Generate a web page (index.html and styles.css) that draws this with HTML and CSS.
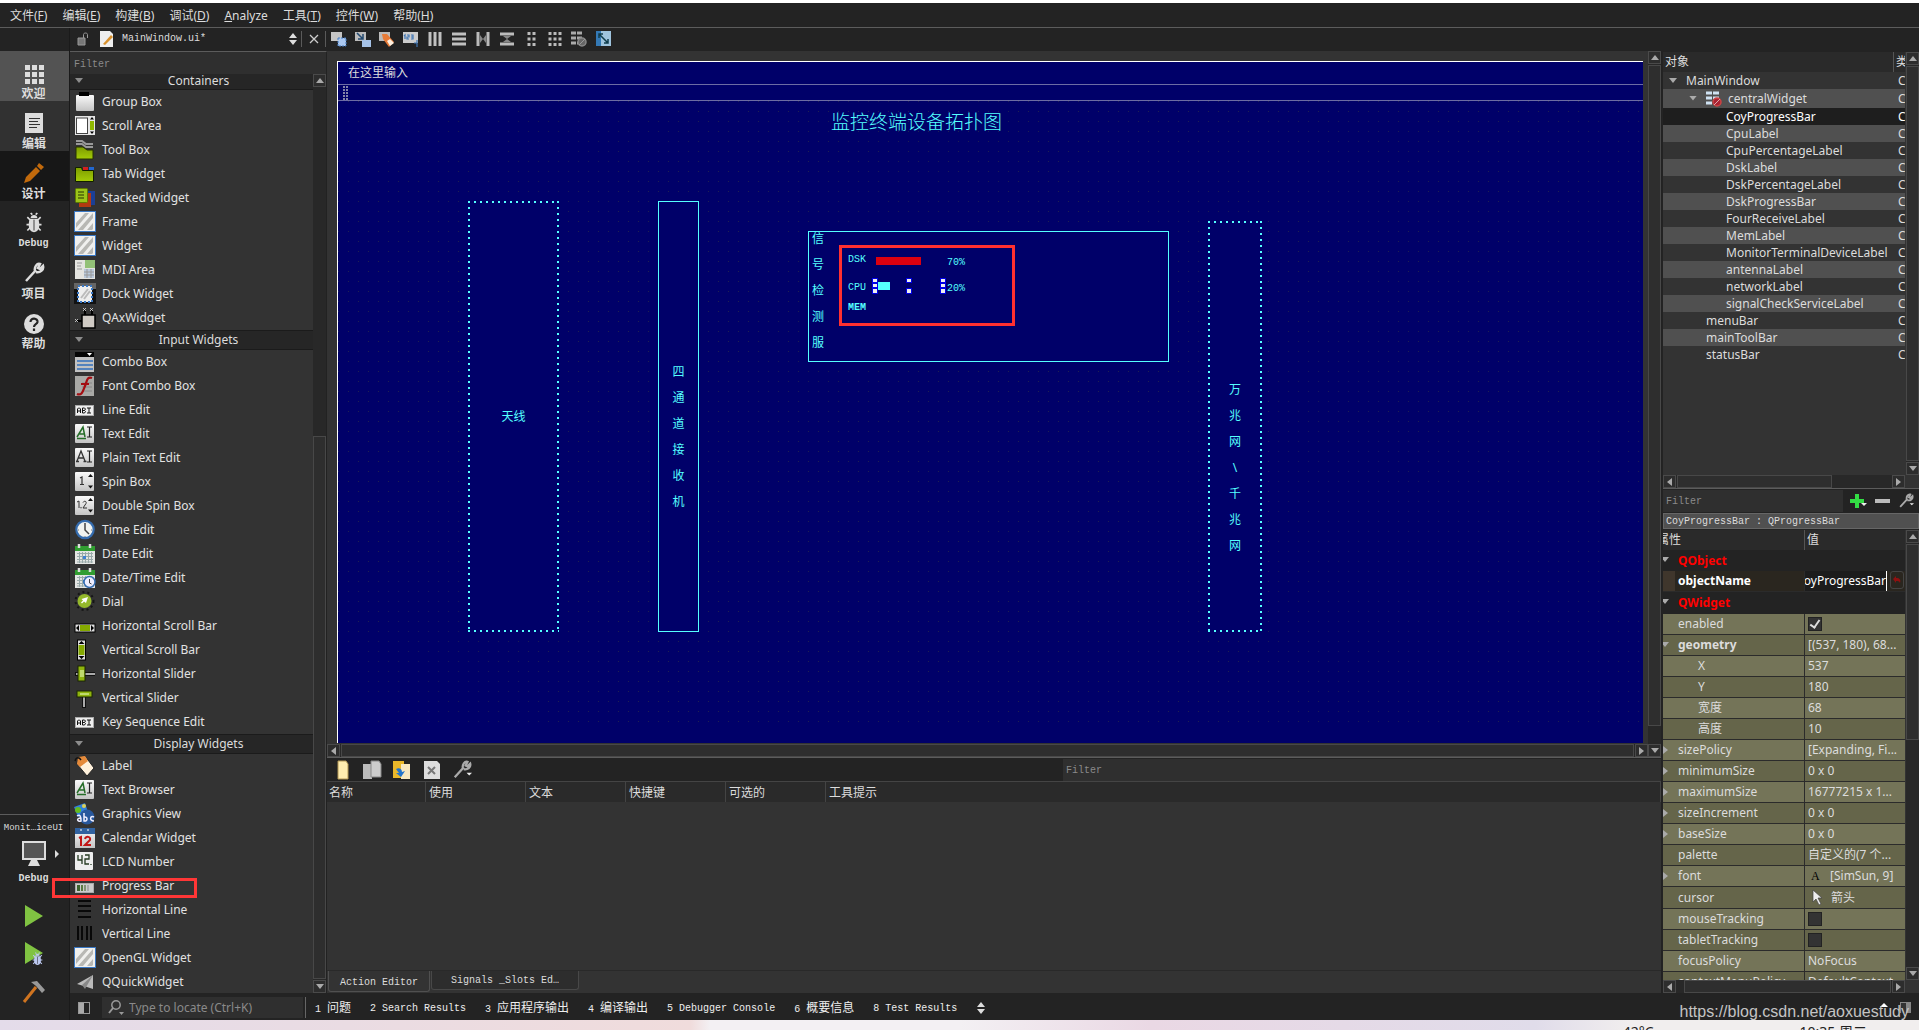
FILE: index.html
```html
<!DOCTYPE html>
<html lang="zh-CN">
<head>
<meta charset="utf-8">
<title>MainWindow.ui - Qt Creator</title>
<link rel="stylesheet" href="styles.css">
</head>
<body>
<svg class="sprite" aria-hidden="true">
<defs>
<linearGradient id="paper" x1="0" y1="0" x2="0" y2="1"><stop offset="0" stop-color="#fafafa"/><stop offset="1" stop-color="#c4c4c4"/></linearGradient>
<linearGradient id="green" x1="0" y1="0" x2="0" y2="1"><stop offset="0" stop-color="#7d9c00"/><stop offset="1" stop-color="#a4cc08"/></linearGradient>
</defs>
<symbol id="group" viewBox="0 0 22 22"><rect x="2" y="4" width="18" height="16" rx="1" fill="url(#paper)"/><path d="M5 1h10v4H5z" fill="#000"/></symbol>
<symbol id="scrollarea" viewBox="0 0 22 22"><rect x="1" y="1" width="20" height="19" fill="#e6e6e6"/><rect x="2.500" y="3" width="11" height="15.500" fill="#fff" stroke="#444"/><path d="M16 6h4v9h-4z" fill="#8fb800"/><path d="M18 2l2 2.500h-4zM18 19l2-2.500h-4z" fill="#000"/></symbol>
<symbol id="toolbox" viewBox="0 0 22 22"><path d="M2 8h7l4 3h6v9H2z" fill="url(#green)" stroke="#263300"/><path d="M2 2h6l4 3h7M2 5h6l4 3h7" stroke="#999" fill="none" stroke-width="2"/></symbol>
<symbol id="tabw" viewBox="0 0 22 22"><path d="M1.500 4.500h6l1 3h11v11h-18z" fill="url(#green)" stroke="#122000"/><path d="M9 4h5v3H9z" fill="#d42020"/><path d="M15 4h5v3h-5z" fill="#2267cf"/></symbol>
<symbol id="stacked" viewBox="0 0 22 22"><rect x="9" y="4" width="12" height="14" fill="#1c3f96"/><rect x="5" y="6" width="12" height="14" fill="#b33a11"/><rect x="1.500" y="1.500" width="12" height="14" rx="1" fill="#9cc51a" stroke="#5e7c00"/><path d="M4 5h6M4 8h6M4 11h6" stroke="#243300"/></symbol>
<symbol id="frame" viewBox="0 0 22 22"><rect x=".5" y=".5" width="21" height="20" fill="#f0f0ee" stroke="#3a78c4"/><path d="M2 12L11 2h4L2 17zM4 19L19 2v5L9 19zM13 19l6-7v6l-1 1z" fill="#b8b8b4"/></symbol>
<symbol id="mdi" viewBox="0 0 22 22"><rect x="1" y="1" width="20" height="19" fill="#e4e4e0"/><path d="M11 1h10v8H11z" fill="#93c177"/><path d="M10 10h10v9H10z" fill="#b9c9dc"/><path d="M3 4h5M3 7h4M3 10h5M10 13h10M10 16h10M13 10v9M17 10v9" stroke="#999"/></symbol>
<symbol id="dock" viewBox="0 0 22 22"><rect width="22" height="21" fill="#111"/><path d="M0 0h22v6H0z" fill="#666"/><rect x="4" y="3" width="14" height="16" fill="#eee" stroke="#3a78c4" stroke-width="2" stroke-dasharray="2 2"/><path d="M7 15l7-9M10 16l6-8" stroke="#bbb" stroke-width="2"/></symbol>
<symbol id="qax" viewBox="0 0 22 22"><path d="M8 8h13v13H8z" fill="#cfcac4" stroke="#000" stroke-width="1.500"/><path d="M11 8V3M18 8V3M8 14H3" stroke="#000" stroke-width="2"/><path d="M9 1l3 3M12 1L9 4M16 1l3 3M19 1l-3 3M1 12l3 3M4 12l-3 3" stroke="#ddd" stroke-width=".8"/></symbol>
<symbol id="combo" viewBox="0 0 22 22"><path d="M1 1h19v20H1z" fill="#c2c2c2"/><path d="M1 1h19v5H1z" fill="#050505"/><path d="M13 2h5l-2.500 3z" fill="#fff"/><path d="M3 10h16M3 14h16M3 18h16" stroke="#5583bd" stroke-width="2"/></symbol>
<symbol id="fontcombo" viewBox="0 0 22 22"><path d="M1 1h19v20H1z" fill="#a9a9a6"/><path d="M8 8h10M8 12h10M8 16h10" stroke="#888"/><path d="M18 3c-5-2-5 3-7 8s-3 10-8 8M7 9h8" fill="none" stroke="#a40d12" stroke-width="2.200"/></symbol>
<symbol id="lineedit" viewBox="0 0 22 22"><rect x="1.500" y="6.500" width="18" height="10" fill="#eee" stroke="#aaa"/><path d="M3.500 14v-4l1-1h1l1 1v4M3.500 12h3M8.500 14V9h2l1 1-1 1.500 1 1-1 1.500zM8.500 11.500h2M13 9h4M13 14h4M15 9v5" fill="none" stroke="#111"/></symbol>
<symbol id="textedit" viewBox="0 0 22 22"><rect x="1" y="1" width="19" height="19" rx="1" fill="url(#paper)"/><path d="M3 14l6-10 2 10M5.500 11h5M3 15.500h9" fill="none" stroke="#256d28" stroke-width="1.500"/><path d="M13 4h5M13 14h5M15.500 4v10" stroke="#222" stroke-width="1.200"/></symbol>
<symbol id="plaintext" viewBox="0 0 22 22"><rect x="1" y="1" width="19" height="19" rx="1" fill="url(#paper)"/><path d="M3 14L7 4l4 10M4.500 11h5M2 14.500h3M9.500 14.500h3" fill="none" stroke="#333" stroke-width="1.300"/><path d="M13 4h5M13 15h5M15.500 4v11" stroke="#222" stroke-width="1.200"/></symbol>
<symbol id="spin" viewBox="0 0 22 22"><rect x="1" y="1" width="19" height="19" rx="1" fill="url(#paper)"/><path d="M6 7l2-1v7M6 13.500h4" fill="none" stroke="#333" stroke-width="1.200"/><path d="M16.500 3l2.500 3h-5zM16.500 17.500L19 14.500h-5z" fill="#111"/></symbol>
<symbol id="dspin" viewBox="0 0 22 22"><rect x="1" y="1" width="19" height="19" rx="1" fill="url(#paper)"/><path d="M3 7l2-1v7M7 12v1.300M9 7.500c1-2 4-1.500 3 1l-3 4.500h4" fill="none" stroke="#333"/><path d="M16.500 3l2.500 3h-5zM16.500 17.500L19 14.500h-5z" fill="#111"/></symbol>
<symbol id="clock" viewBox="0 0 22 22"><circle cx="11" cy="10.500" r="8.700" fill="#f1f3f0" stroke="#356cae" stroke-width="2.200"/><path d="M11 4v7l4 4" fill="none" stroke="#444" stroke-width="1.500"/><path d="M4 11h1M17 11h1M11 17v1" stroke="#777"/></symbol>
<symbol id="date" viewBox="0 0 22 22"><path d="M1 3h20v18H1z" fill="#e4e6e4"/><path d="M1 3h20v5H1z" fill="#319d31"/><path d="M5 1v4M16 1v4" stroke="#ddd" stroke-width="2.500"/><path d="M3 10.500h16M3 13.500h16M3 16.500h16M3 19h16M5.500 9v11M8.500 9v11M11.500 9v11M14.500 9v11M17.500 9v11" stroke="#9aa"/><path d="M9 13h3v3H9z" fill="#3f82d4"/></symbol>
<symbol id="datetime" viewBox="0 0 22 22"><use href="#date"/><circle cx="15.500" cy="15" r="5.500" fill="#eef" stroke="#356cae" stroke-width="1.500"/><path d="M15.500 12v4l2 1" fill="none" stroke="#444"/></symbol>
<symbol id="dial" viewBox="0 0 22 22"><circle cx="10.500" cy="10" r="9" fill="none" stroke="#151515" stroke-width="2" stroke-dasharray="2 3"/><circle cx="10.500" cy="10" r="7" fill="#94b82b"/><path d="M14 6l-2 6-2-1.500-2 2-1-1 2-2L7.500 8z" fill="#fff"/></symbol>
<symbol id="hsb" viewBox="0 0 22 22"><rect x="1" y="9" width="20" height="8" fill="#ddd" stroke="#000"/><path d="M6 10h10v6H6z" fill="#85a900"/><path d="M2 13l3-3v6zM20 13l-3-3v6z" fill="#000"/></symbol>
<symbol id="vsb" viewBox="0 0 22 22"><rect x="3.500" y="1" width="8" height="20" fill="#ddd" stroke="#000"/><path d="M4.500 6h6v10h-6z" fill="#85a900"/><path d="M7.500 2l3 3h-6zM7.500 20l3-3h-6z" fill="#000"/></symbol>
<symbol id="hslider" viewBox="0 0 22 22"><path d="M1 11h20" stroke="#111" stroke-width="4"/><path d="M2 11h19" stroke="#aaa" stroke-width="2"/><rect x="4" y="3" width="7" height="15" fill="#8fb40e" stroke="#1b2600"/><path d="M7 7v7M9 7v7" stroke="#efc"/></symbol>
<symbol id="vslider" viewBox="0 0 22 22"><path d="M10 4v17" stroke="#111" stroke-width="4"/><path d="M10 4v16" stroke="#aaa" stroke-width="2"/><rect x="3" y="4" width="15" height="6" fill="#8fb40e" stroke="#1b2600"/><path d="M6 7h9" stroke="#efc"/></symbol>
<symbol id="label" viewBox="0 0 22 22"><path d="M4 2l7-1 9 12-7 8L3 9z" fill="#fff1dc" stroke="#222"/><path d="M4 2l7-1 3 5-8 6-3-3z" fill="#e58a3a"/><path d="M1 6c1-4 4-4 6-1" fill="none" stroke="#111" stroke-width="1.500"/></symbol>
<symbol id="graphics" viewBox="0 0 22 22"><path d="M0 4l11-4 3 9-10 5z" fill="#3080dd"/><circle cx="4" cy="7" r="3" fill="#66bb20"/><circle cx="10" cy="3" r="2" fill="#ddd055"/><circle cx="13" cy="14" r="7.500" fill="#28589d"/><path d="M3 13c3-2 4 0 4 5-4 1-5-3 0-3M10 10v8c4 1 4-5 0-4M20 14c-4-2-5 4 0 4" fill="none" stroke="#eef" stroke-width="1.500"/></symbol>
<symbol id="calendar" viewBox="0 0 22 22"><path d="M1 1h20v20H1z" fill="url(#paper)"/><path d="M1 1h20v6H1z" fill="#3162a0"/><path d="M6 3h2M13 3h2" stroke="#fff"/><path d="M5 11l2-1v9M11 12c1-3 6-3 5 1l-5 5h6" fill="none" stroke="#c11616" stroke-width="2"/></symbol>
<symbol id="lcd" viewBox="0 0 22 22"><rect x="1" y="1" width="18" height="18" rx="1" fill="#eee"/><path d="M4 4v5h4M8 4v9M11 4h4v4h-4v5h4M17 13v1" fill="none" stroke="#263b22" stroke-width="1.300"/></symbol>
<symbol id="progress" viewBox="0 0 22 22"><rect x="1.500" y="8.500" width="18" height="9" fill="#ccc" stroke="#aaa"/><path d="M3 10h3v6H3z" fill="#3c632e"/><path d="M7 10h2v6H7z" fill="#597b42"/><path d="M10 10h2v6h-2z" fill="#829475"/><path d="M13 10h2v6h-2z" fill="#aaa"/></symbol>
<symbol id="hline" viewBox="0 0 22 22"><path d="M4 2h13M4 7h13M4 12h13M4 18h13" stroke="#080808" stroke-width="2"/></symbol>
<symbol id="vline" viewBox="0 0 22 22"><path d="M4 3v14M8 3v14M13 3v14M17 3v14" stroke="#080808" stroke-width="2"/></symbol>
<symbol id="plane" viewBox="0 0 22 22"><path d="M3 13L19 4v14l-6-2z" fill="#bbb"/><path d="M8 14l11-10-8 14z" fill="#888"/></symbol>
<symbol id="wrench" viewBox="0 0 22 22"><path d="M3 19L13 8M12 9c-1-4 2-8 5-7l-2 4 2 1 3-3c1 4-3 7-7 6" fill="none" stroke="currentColor" stroke-width="2.500"/></symbol>
<symbol id="wrenchmenu" viewBox="0 0 22 22"><use href="#wrench"/><path d="M16 14h6l-3 3z" fill="#eee"/></symbol>
<symbol id="updown" viewBox="0 0 8 12"><path d="M4 0l4 5H0zM4 12l4-5H0z" fill="#ddd"/></symbol>
<symbol id="bug" viewBox="0 0 24 26"><path d="M8 7c0-5 8-5 8 0z" fill="currentColor"/><path d="M3 15h18M4 22l4-4M20 22l-4-4M4 6l4 4M20 6l-4 4M8 1l2 2M16 1l-2 2" fill="none" stroke="currentColor" stroke-width="2"/><path d="M7 8h10c3 8 1 16-5 16S4 16 7 8z" fill="currentColor"/><path d="M12 9v13" stroke="#232323"/></symbol>
</svg>

<div class="desk"></div>
<nav class="menubar">
<a href="#">文件(<u>F</u>)</a><a href="#">编辑(<u>E</u>)</a><a href="#">构建(<u>B</u>)</a><a href="#">调试(<u>D</u>)</a><a href="#"><u>A</u>nalyze</a><a href="#">工具(<u>T</u>)</a><a href="#">控件(<u>W</u>)</a><a href="#">帮助(<u>H</u>)</a>
</nav>

<div class="app">
<aside class="modes">
<button class="mode lit"><svg width="20" height="20" viewBox="0 0 20 20"><path d="M1 1h5v5H1zM8 1h5v5H8zM15 1h5v5h-5zM1 8h5v5H1zM8 8h5v5H8zM15 8h5v5h-5zM1 15h5v5H1zM8 15h5v5H8zM15 15h5v5h-5z" fill="#ddd"/></svg><b>欢迎</b></button>
<button class="mode edit"><svg width="20" height="20" viewBox="0 0 20 20"><path d="M1 0h18v20H1z" fill="#ddd"/><path d="M5 5.500h11M5 8.500h9M5 11.500h11M5 14.500h8" stroke="#333"/></svg><b>编辑</b></button>
<button class="mode design"><svg width="22" height="22" viewBox="0 0 22 22"><path d="M1 21l2-6L13 5l4 4L7 19zM14 4l2-3 5 4-3 3z" fill="#c26a0c"/></svg><b>设计</b></button>
<button class="mode"><svg width="20" height="22"><use href="#bug"/></svg><b class="mono">Debug</b></button>
<button class="mode"><svg width="22" height="22"><use href="#wrench"/></svg><b>项目</b></button>
<button class="mode"><svg width="20" height="20" viewBox="0 0 20 20"><circle cx="10" cy="10" r="10" fill="#ddd"/><path d="M6.500 8c0-5 7.500-4 7 0-.5 2.500-3.500 2-3.500 5M10 14.500V17" fill="none" stroke="#232323" stroke-width="2.200"/></svg><b>帮助</b></button>
<div class="kit">
<span class="mono project">Monit…iceUI</span>
<button class="target"><svg width="26" height="25" viewBox="0 0 26 25"><path d="M2 1h22v17H2z" fill="#555" stroke="#ddd" stroke-width="2"/><path d="M10 19h6l3 6H7z" fill="#ddd"/></svg><svg class="more" width="4" height="8" viewBox="0 0 4 8"><path d="M0 0l4 4-4 4z" fill="#ddd"/></svg></button>
<b class="mono">Debug</b>
<button class="run" aria-label="Run"><svg width="20" height="22" viewBox="0 0 20 22"><path d="M1 0l18 11L1 22z" fill="#80c342"/></svg></button>
<button class="run" aria-label="Start debugging"><svg width="20" height="24" viewBox="0 0 20 24"><path d="M1 0l18 11L1 22z" fill="#80c342"/><svg x="7" y="10" width="13" height="14" color="#bcc8f0"><use href="#bug"/></svg></svg></button>
<button class="run" aria-label="Build"><svg width="24" height="22" viewBox="0 0 24 22"><path d="M2 21L14 6" stroke="#cf7420" stroke-width="3"/><path d="M9 1l6-1 8 9-3 3-6-7z" fill="#999"/></svg></button>
</div>
</aside>

<div class="content">
<div class="toolbar">
<div class="filebar"><svg width="12" height="14" viewBox="0 0 12 14"><path d="M1 6h7v7H1z" fill="#777" stroke="#999"/><path d="M6.500 6V2.500c0-2 4-2 4 0V6" fill="none" stroke="#999"/></svg>
<svg class="doc" width="14" height="16" viewBox="0 0 14 16"><path d="M0 0h10l3 3v13H0z" fill="#eee"/><path d="M3 13l8-9 2 2-8 8z" fill="#d7902c"/></svg>
<span class="mono">MainWindow.ui*</span><svg class="end" width="8" height="12"><use href="#updown"/></svg><i></i><button aria-label="Close"><svg width="10" height="10" viewBox="0 0 10 10"><path d="M1 1l8 8M9 1L1 9" stroke="#ccc" stroke-width="1.300"/></svg></button><i></i></div>
<div class="tools">
<svg viewBox="0 0 16 16"><path d="M0 1h11v9H0z" fill="#c4c4c4"/><rect x="7" y="7" width="8" height="8" fill="#abc8f0" stroke="#447bbf" stroke-dasharray="2 1"/></svg>
<svg viewBox="0 0 16 16"><path d="M0 1h11v9H0z" fill="#bbb"/><path d="M2 2l6 6M8 3v5H3" fill="none" stroke="#234a70" stroke-width="1.500"/><path d="M7 9h9v7H7z" fill="#a6c3e8"/></svg>
<svg viewBox="0 0 16 16"><path d="M0 1h11v9H0z" fill="#bbb"/><path d="M3 3l5 0 7 8-5 5-6-8z" fill="#e77b38"/><path d="M8 10l3-2 4 4-4 3z" fill="#fff0df"/></svg>
<svg viewBox="0 0 16 16"><path d="M0 1h15v11H0z" fill="#ccc"/><path d="M1 5l1-1v4M4 4h2v2H4v2h2M8 4h2v2H8M10 6v2H8M11 12h3M14 9v7" fill="none" stroke="#3d75b5" stroke-width="1.200"/></svg>
<svg viewBox="0 0 16 16"><path d="M3 1v14M8 1v14M13 1v14" stroke="#c0c0c0" stroke-width="3"/></svg>
<svg viewBox="0 0 16 16"><path d="M1 3h14M1 8h14M1 13h14" stroke="#c0c0c0" stroke-width="3"/></svg>
<svg viewBox="0 0 16 16"><path d="M3 1v14M13 1v14" stroke="#bbb" stroke-width="3"/><path d="M5 4l3 4 3-4v8L8 8l-3 4z" fill="#888"/></svg>
<svg viewBox="0 0 16 16"><path d="M1 3h14M1 13h14" stroke="#bbb" stroke-width="3"/><path d="M4 5h8L8 8l4 3H4l4-3z" fill="#888"/></svg>
<svg viewBox="0 0 16 16"><path d="M6 1v14M11 1v14" stroke="#bbb" stroke-width="3" stroke-dasharray="3 2.500"/></svg>
<svg viewBox="0 0 16 16"><path d="M3 1v14M8 1v14M13 1v14" stroke="#bbb" stroke-width="3" stroke-dasharray="3 2.500"/></svg>
<svg viewBox="0 0 16 16"><path d="M0 2h12M0 7h12M0 12h7" stroke="#aaa" stroke-width="3" stroke-dasharray="5 1"/><circle cx="11" cy="11" r="4" fill="#666" stroke="#888" stroke-width="1.500"/><path d="M8 14l6-6" stroke="#999"/></svg>
<svg viewBox="0 0 16 16"><path d="M1 0h15v15H1z" fill="#9fc4de"/><path d="M1 0h5v15H1z" fill="#3479b5"/><path d="M4 3l9 9M4 7V3h4M13 8v4H9" fill="none" stroke="#103d4c" stroke-width="1.500"/></svg>
</div>
</div>

<div class="work">
<section class="widgetbox">
<input class="filter" placeholder="Filter" aria-label="Filter widgets">
<div class="boxbody">
<div class="list">
<h2>Containers</h2>
<ul><li><svg><use href="#group"/></svg>Group Box</li><li><svg><use href="#scrollarea"/></svg>Scroll Area</li><li><svg><use href="#toolbox"/></svg>Tool Box</li><li><svg><use href="#tabw"/></svg>Tab Widget</li><li><svg><use href="#stacked"/></svg>Stacked Widget</li><li><svg><use href="#frame"/></svg>Frame</li><li><svg><use href="#frame"/></svg>Widget</li><li><svg><use href="#mdi"/></svg>MDI Area</li><li><svg><use href="#dock"/></svg>Dock Widget</li><li><svg><use href="#qax"/></svg>QAxWidget</li></ul>
<h2>Input Widgets</h2>
<ul><li><svg><use href="#combo"/></svg>Combo Box</li><li><svg><use href="#fontcombo"/></svg>Font Combo Box</li><li><svg><use href="#lineedit"/></svg>Line Edit</li><li><svg><use href="#textedit"/></svg>Text Edit</li><li><svg><use href="#plaintext"/></svg>Plain Text Edit</li><li><svg><use href="#spin"/></svg>Spin Box</li><li><svg><use href="#dspin"/></svg>Double Spin Box</li><li><svg><use href="#clock"/></svg>Time Edit</li><li><svg><use href="#date"/></svg>Date Edit</li><li><svg><use href="#datetime"/></svg>Date/Time Edit</li><li><svg><use href="#dial"/></svg>Dial</li><li><svg><use href="#hsb"/></svg>Horizontal Scroll Bar</li><li><svg><use href="#vsb"/></svg>Vertical Scroll Bar</li><li><svg><use href="#hslider"/></svg>Horizontal Slider</li><li><svg><use href="#vslider"/></svg>Vertical Slider</li><li><svg><use href="#lineedit"/></svg>Key Sequence Edit</li></ul>
<h2>Display Widgets</h2>
<ul><li><svg><use href="#label"/></svg>Label</li><li><svg><use href="#textedit"/></svg>Text Browser</li><li><svg><use href="#graphics"/></svg>Graphics View</li><li><svg><use href="#calendar"/></svg>Calendar Widget</li><li><svg><use href="#lcd"/></svg>LCD Number</li><li class="marked"><svg><use href="#progress"/></svg>Progress Bar</li><li><svg><use href="#hline"/></svg>Horizontal Line</li><li><svg><use href="#vline"/></svg>Vertical Line</li><li><svg><use href="#frame"/></svg>OpenGL Widget</li><li><svg><use href="#plane"/></svg>QQuickWidget</li></ul>
</div>
<div class="sb v box-sb"><button class="up"></button><div class="track"><span class="thumb"></span></div><button class="down"></button></div>
</div>
</section>

<main class="center">
<div class="formrow">
<div class="viewport">
<div class="form">
<div class="form-menu">在这里输入</div>
<div class="form-tool"><span></span></div>
<div class="canvas">
<div class="title">监控终端设备拓扑图</div>
<div class="node dotted antenna">天线</div>
<div class="node receiver">四<br>通<br>道<br>接<br>收<br>机</div>
<div class="node signal">信<br>号<br>检<br>测<br>服</div>
<div class="node dotted network">万<br>兆<br>网<br>\<br>千<br>兆<br>网</div>
<span class="val dsk">DSK</span><span class="val cpu">CPU</span><span class="val mem">MEM</span>
<span class="val dskp">70%</span><span class="val cpup">20%</span>
<div class="bar red"></div><div class="bar cyan"></div>
<div class="handles"><i></i><i></i><i></i><i></i><i class="gap"></i><i></i><i></i><i></i><i></i></div>
<div class="callout"></div>
</div>
<div class="form-status"></div>
</div>
<div class="sb h"><button class="left"></button><div class="track"><span class="thumb"></span></div><button class="right"></button></div>
</div>
<div class="sb v form-sb"><button class="up"></button><div class="track"><span class="thumb"></span></div><button class="down"></button></div>
</div>
<div class="actions">
<div class="action-tools">
<svg viewBox="0 0 20 20"><path d="M6 1h8l2 3v15H6z" fill="#ffedb0" stroke="#b39755"/></svg>
<svg viewBox="0 0 20 20"><path d="M1 4h9v15H1z" fill="#bbb"/><path d="M9 1h8l2 3v13H9z" fill="#ccc" stroke="#888"/></svg>
<svg viewBox="0 0 20 20"><path d="M1 1h11v17H1z" fill="#e9b72a"/><path d="M9 4h9v15H9z" fill="#f7e7c0"/><path d="M4 9c3-2 6 0 6 3l3-1-4 6-5-4h3" fill="#2273cb"/></svg>
<svg viewBox="0 0 20 20"><path d="M2 1h13l3 3v15H2z" fill="#ddd"/><path d="M6 7l7 7M13 7l-7 7" stroke="#777" stroke-width="2"/></svg>
<svg class="wr" viewBox="0 0 22 22"><use href="#wrenchmenu"/></svg>
<input class="filter" placeholder="Filter" aria-label="Filter actions">
</div>
<table class="action-table"><thead><tr><th>名称</th><th>使用</th><th>文本</th><th>快捷键</th><th>可选的</th><th>工具提示</th></tr></thead></table>
<div class="tabs"><button class="mono on">Action Editor</button><button class="mono">Signals _Slots Ed…</button></div>
</div>
</main>

<aside class="inspect">
<div class="objects">
<div class="clip"><table class="tree">
<thead><tr><th>对象</th><th>类</th></tr></thead>
<tbody>
<tr><td class="l0"><span class="tri"></span>MainWindow</td><td>C</td></tr>
<tr class="tall"><td class="l1"><span class="tri"></span><svg width="16" height="16" viewBox="0 0 16 16"><path d="M0 2h13M0 7h13M0 12h6" stroke="#cfe2f2" stroke-width="3" stroke-dasharray="6 1"/><circle cx="11" cy="11" r="4" fill="#a23" stroke="#c44" stroke-width="1.500"/><path d="M8 14l6-6" stroke="#daa"/></svg>centralWidget</td><td>C</td></tr>
<tr class="sel"><td>CoyProgressBar</td><td>C</td></tr>
<tr><td>CpuLabel</td><td>C</td></tr>
<tr><td>CpuPercentageLabel</td><td>C</td></tr>
<tr><td>DskLabel</td><td>C</td></tr>
<tr><td>DskPercentageLabel</td><td>C</td></tr>
<tr><td>DskProgressBar</td><td>C</td></tr>
<tr><td>FourReceiveLabel</td><td>C</td></tr>
<tr><td>MemLabel</td><td>C</td></tr>
<tr><td>MonitorTerminalDeviceLabel</td><td>C</td></tr>
<tr><td>antennaLabel</td><td>C</td></tr>
<tr><td>networkLabel</td><td>C</td></tr>
<tr><td>signalCheckServiceLabel</td><td>C</td></tr>
<tr><td class="l2">menuBar</td><td>C</td></tr>
<tr><td class="l2">mainToolBar</td><td>C</td></tr>
<tr><td class="l2">statusBar</td><td>C</td></tr>
</tbody></table></div>
<div class="sb h obj-h"><button class="left"></button><div class="track"><span class="thumb"></span></div><button class="right"></button></div>
<div class="sb v"><button class="up"></button><div class="track"><span class="thumb"></span></div><button class="down"></button></div>
</div>
<div class="propbar"><input class="filter" placeholder="Filter" aria-label="Filter properties">
<svg viewBox="0 0 18 16"><path d="M6 1h4v5h5v4h-5v5H6v-5H1V6h5z" fill="#3d4"/><path d="M12 10h6l-3 3z" fill="#eee"/></svg><svg viewBox="0 0 18 16"><path d="M2 6h15v4H2z" fill="#bbb"/></svg><svg class="wr" viewBox="0 0 22 22"><use href="#wrenchmenu"/></svg></div>
<div class="who mono">CoyProgressBar : QProgressBar</div>
<div class="props">
<div class="clip"><table class="ptable">
<thead><tr><th><span>属性</span></th><th>值</th></tr></thead>
<tbody>
<tr class="cat"><td colspan="2"><span class="tri"></span>QObject</td></tr>
<tr class="name"><td>objectName</td><td><div class="edit"><input value="CoyProgressBar" aria-label="objectName"><button aria-label="Reset"><svg width="8" height="8" viewBox="0 0 8 8"><path d="M0 3l3-3v2c4 0 5 2 4 5-1-2-2-2-4-2v2z" fill="#8e1111"/></svg></button></div></td></tr>
<tr class="cat last"><td colspan="2"><span class="tri"></span>QWidget</td></tr>
<tr class="a"><td>enabled</td><td><input type="checkbox" checked aria-label="enabled"></td></tr>
<tr class="b bold"><td><span class="tri"></span>geometry</td><td>[(537, 180), 68...</td></tr>
<tr class="a sub"><td>X</td><td>537</td></tr>
<tr class="b sub"><td>Y</td><td>180</td></tr>
<tr class="a sub"><td>宽度</td><td>68</td></tr>
<tr class="b sub"><td>高度</td><td>10</td></tr>
<tr class="a"><td><span class="tri r"></span>sizePolicy</td><td>[Expanding, Fi...</td></tr>
<tr class="b"><td><span class="tri r"></span>minimumSize</td><td>0 x 0</td></tr>
<tr class="a"><td><span class="tri r"></span>maximumSize</td><td>16777215 x 1...</td></tr>
<tr class="b"><td><span class="tri r"></span>sizeIncrement</td><td>0 x 0</td></tr>
<tr class="a"><td><span class="tri r"></span>baseSize</td><td>0 x 0</td></tr>
<tr class="b"><td>palette</td><td>自定义的(7 个...</td></tr>
<tr class="a"><td><span class="tri r"></span>font</td><td><span class="fa">A</span>[SimSun, 9]</td></tr>
<tr class="b cur"><td>cursor</td><td><svg width="22" height="18" viewBox="0 0 22 18"><path d="M5 1v12l3-3 3 6 2-1-3-6h4z" fill="#eee" stroke="#444" stroke-width=".7"/></svg>箭头</td></tr>
<tr class="a"><td>mouseTracking</td><td><input type="checkbox" aria-label="mouseTracking"></td></tr>
<tr class="b"><td>tabletTracking</td><td><input type="checkbox" aria-label="tabletTracking"></td></tr>
<tr class="a"><td>focusPolicy</td><td>NoFocus</td></tr>
<tr class="b"><td>contextMenuPolicy</td><td>DefaultContext...</td></tr>
</tbody></table></div>
<div class="sb h prop-h"><button class="left"></button><div class="track"><span class="thumb"></span></div><button class="right"></button></div>
<div class="sb v prop-sb"><button class="up"></button><div class="track"><span class="thumb"></span></div><button class="down"></button></div>
</div>
</aside>
</div>

<footer class="status">
<button class="side" aria-label="Toggle sidebar"><svg width="12" height="12" viewBox="0 0 12 12"><rect x=".5" y=".5" width="11" height="11" fill="none" stroke="#999"/><path d="M1 1h5v10H1z" fill="#aaa"/></svg></button>
<label class="locate"><svg width="16" height="16" viewBox="0 0 16 16"><circle cx="8" cy="5" r="4.200" fill="none" stroke="#999" stroke-width="1.500"/><path d="M5 8l-4 5" stroke="#999" stroke-width="2"/><path d="M11 12h5l-2.500 3z" fill="#999"/></svg><input placeholder="Type to locate (Ctrl+K)"></label>
<nav class="mono"><button>1 <em>问题</em></button><button>2 Search Results</button><button>3 <em>应用程序输出</em></button><button>4 <em>编译输出</em></button><button>5 Debugger Console</button><button>6 <em>概要信息</em></button><button>8 Test Results</button></nav>
<svg class="ud" width="8" height="12"><use href="#updown"/></svg>
<svg class="rt" width="32" height="14" viewBox="0 0 32 14"><path d="M4 2l4 4H0z" fill="#fff"/><path d="M20 1h11v11H20z" fill="#888"/><path d="M21 2h5v10h-5z" fill="#333"/></svg>
<span class="mark">https://blog.csdn.net/aoxuestudy</span>
</footer>
</div>
</div>
<div class="taskbar"><span>42°C</span><span>10:35 周二</span></div>
</body>
</html>
```
FILE: styles.css
```css
*, *::before, *::after { box-sizing: border-box; }
body {
  margin: 0;
  height: 100vh;
  display: flex;
  flex-direction: column;
  overflow: hidden;
  background: #232323;
  color: #dcdcdc;
  font: 12px/16px "Noto Sans", "Noto Sans CJK SC", sans-serif;
}
button, input { font: inherit; color: inherit; border: 0; padding: 0; margin: 0; background: none; outline: 0; }
svg { display: block; flex: none; }
a { color: inherit; text-decoration: none; }
em { font: 12px/16px "Noto Sans CJK SC", sans-serif; }
.mono, .filter { font-family: "Liberation Mono", "Noto Sans CJK SC", monospace; font-size: 10px; }
.sprite { position: absolute; width: 0; height: 0; }
.desk { height: 3px; background: #fff; flex: none; }

.menubar { height: 25px; flex: none; display: flex; gap: 15px; padding: 2px 10px 0; align-items: center; border-bottom: 1px solid #5c5c5c; }

.app { flex: 1; min-height: 0; display: flex; }
.modes { width: 69px; flex: none; display: flex; flex-direction: column; padding-top: 23px; }
.mode { height: 50px; flex: none; display: flex; flex-direction: column; align-items: center; justify-content: flex-end; gap: 2px; color: #ddd; padding-right: 2px; }
.mode b, .kit b { line-height: 16px; }
.mode b { height: 15px; }
.mode.lit { background: #535353; }
.mode.edit { background: #313131; }
.mode.design { background: #171717; }
.kit { margin-top: auto; border-top: 1px solid #5c5c5c; display: flex; flex-direction: column; align-items: center; padding: 5px 2px 17px 0; }
.project { font-size: 9px; }
.target { display: flex; align-items: center; padding: 5px 0; position: relative; }
.more { position: absolute; left: 34px; }
.kit b { margin-bottom: 18px; }
.run { margin-bottom: 15px; }
.run:last-child { margin: 0; }

.content { flex: 1; min-width: 0; display: flex; flex-direction: column; border-left: 1px solid #1a1a1a; }
.toolbar { height: 23px; flex: none; display: flex; padding-bottom: 2px; }
.filebar { width: 256px; display: flex; align-items: center; padding-left: 7px; }
.filebar i { width: 1px; height: 16px; background: #5a5a5a; }
.filebar button { padding: 0 6px 0 7px; }
.doc { margin: 0 8px 0 11px; }
.end { margin: 0 4px 0 auto; }
.tools { display: flex; align-items: center; gap: 8px; padding-left: 5px; }
.tools svg { width: 16px; height: 16px; }

.work { flex: 1; min-height: 0; display: flex; }
.filter { background: #2f2f2f; color: #ddd; }
.filter::placeholder { color: #8a8a8a; }
.widgetbox { width: 257px; flex: none; display: flex; flex-direction: column; background: #333; border-top: 1px solid #5c5c5c; border-right: 1px solid #222; }
.widgetbox .filter { height: 22px; flex: none; padding: 2px 4px 0; width: 100%; }
.boxbody { flex: 1; min-height: 0; display: flex; }
.list { flex: 1; }
.list h2 { margin: 0; height: 20px; font: inherit; line-height: 18px; text-align: center; background: #262626; border: solid #1b1b1b; border-width: 1px 0; position: relative; padding-left: 14px; }
.list h2:first-child { height: 16px; line-height: 14px; border-top: 0; }
.list h2::before { content: ""; position: absolute; left: 5px; top: 6px; border: 4px solid transparent; border-top: 5px solid #8c8c8c; border-bottom: 0; }
.list h2:first-child::before { top: 4px; }
.list ul { margin: 0; padding: 0; list-style: none; }
.list li { height: 24px; display: flex; align-items: center; gap: 6px; padding-left: 4px; color: #e2e2e2; }
.list li svg { width: 22px; height: 22px; }
.marked { position: relative; }
.marked::after { content: ""; position: absolute; left: -18px; top: 4px; width: 145px; height: 20px; border: 3px solid #ff3636; }

.sb { display: flex; background: #282828; flex: none; }
.sb button { width: 13px; height: 13px; border: 1px solid #4a4a4a; background: #2d2d2d; flex: none; display: grid; place-items: center; }
.sb button::before { content: ""; border: 4px solid transparent; }
.sb .up::before { border-bottom: 5px solid #aaa; border-top: 0; }
.sb .down::before { border-top: 5px solid #aaa; border-bottom: 0; }
.sb .left::before { border-right: 5px solid #aaa; border-left: 0; }
.sb .right::before { border-left: 5px solid #aaa; border-right: 0; }
.v { width: 13px; flex-direction: column; }
.h { height: 13px; }
.track { flex: 1; display: flex; flex-direction: inherit; padding: 1px; min-height: 0; }
.v .track { padding: 1px 0; }
.h .track { padding: 0 1px; }
.thumb { flex: 1; border: 1px solid #484848; background: #2e2e2e; }
.box-sb .track { padding-top: 349px; }
.form-sb .track { padding-bottom: 18px; }
.obj-h .track { padding-right: 60px; }
.prop-h .track { padding-left: 8px; }
.prop-sb .thumb { flex: 0 1 196px; }

.center { flex: 1; min-width: 0; display: flex; flex-direction: column; background: #333; }
.formrow { flex: 1; min-height: 0; display: flex; }
.viewport { flex: 1; min-width: 0; display: flex; flex-direction: column; }
.form { flex: 1; min-height: 0; margin: 10px 5px 1px 10px; border: solid #fff; border-width: 1px 0 0 1px; background: #000069; display: flex; flex-direction: column; }
.form-menu { height: 23px; line-height: 22px; padding-left: 10px; border-bottom: 1px solid #6c6ca4; }
.form-tool { height: 16px; border-bottom: 1px solid #6c6ca4; padding: 0 5px; }
.form-tool span { display: block; width: 5px; height: 15px; background: repeating-linear-gradient(#000069 0 1px, transparent 1px 3px), repeating-linear-gradient(90deg, #8484a8 0 2px, #000069 2px 3px); }
.form-status { height: 21px; flex: none; }
.canvas { flex: 1; position: relative; color: #5ff; background: radial-gradient(circle at 0 0, #222250 1px, transparent 1px) 0 0 / 10px 10px; }
.canvas > * { position: absolute; }
.title { left: 493px; top: 7px; font-size: 19px; line-height: 26px; font-family: "Noto Sans CJK SC", sans-serif; font-weight: 300; }
.node { border: 1px solid #5ff; background: #000069; display: flex; align-items: center; justify-content: center; line-height: 26px; }
.dotted {
  border: 0;
  background:
    repeating-linear-gradient(90deg, #5ff 0 2px, transparent 2px 6px) top / 100% 2px no-repeat,
    repeating-linear-gradient(90deg, #5ff 0 2px, transparent 2px 6px) bottom / 100% 2px no-repeat,
    repeating-linear-gradient(#5ff 0 2px, transparent 2px 6px) left / 2px 100% no-repeat,
    repeating-linear-gradient(#5ff 0 2px, transparent 2px 6px) right / 2px 100% no-repeat,
    #000069;
}
.antenna { left: 130px; top: 100px; width: 91px; height: 431px; }
.receiver { left: 320px; top: 100px; width: 41px; height: 431px; padding-top: 40px; }
.signal { left: 470px; top: 130px; width: 361px; height: 131px; justify-content: flex-start; padding: 0 0 12px 3px; }
.network { left: 870px; top: 120px; width: 54px; height: 411px; text-align: center; padding-top: 82px; }
.val { font: 10px/12px "Liberation Mono", monospace; }
.dsk { left: 510px; top: 153px; }
.cpu { left: 510px; top: 181px; }
.mem { left: 510px; top: 201px; font-weight: bold; }
.dskp { left: 609px; top: 156px; }
.cpup { left: 609px; top: 182px; }
.bar { height: 8px; }
.red { left: 538px; top: 156px; width: 45px; background: #dc0010; }
.cyan { left: 540px; top: 181px; width: 12px; background: #5ff; }
.handles { left: 534px; top: 177px; width: 74px; height: 16px; display: grid; grid-template: 5px 5px 6px / repeat(3, 6px); justify-content: space-between; }
.handles i { background: #eee; border: 1px solid #0000e6; }
.handles .gap { visibility: hidden; }
.callout { left: 501px; top: 144px; width: 176px; height: 81px; border: 3px solid #ff3030; }

.actions { height: 236px; flex: none; display: flex; flex-direction: column; border-top: 1px solid #5c5c5c; }
.action-tools { height: 23px; flex: none; display: flex; align-items: center; background: #232323; padding-left: 5px; gap: 10px; }
.action-tools svg { width: 20px; height: 20px; }
.wr { color: #aaa; }
.action-tools .filter { width: 45%; height: 22px; margin-left: auto; padding: 2px 3px 0; }
.action-table { width: 100%; table-layout: fixed; border-spacing: 0; }
.action-table th { height: 21px; padding: 2px 3px 0; font-weight: 400; text-align: left; background: #2a2a2a; border: solid #444; border-width: 1px 1px 0 0; width: 100px; }
.action-table th:first-child { width: 99px; padding-left: 2px; }
.action-table th:last-child { width: auto; }
.tabs { margin-top: auto; height: 23px; border-top: 1px solid #292929; display: flex; align-items: flex-start; gap: 1px; padding-left: 1px; }
.tabs button { height: 19px; padding: 2px 14px 0; min-width: 148px; border: 1px solid #484848; border-top: 0; border-radius: 0 0 3px 3px; background: #2d2d2d; }
.tabs .on { height: 21px; min-width: 0; background: #333; padding: 3px 11px 0; border-color: #505050; }

.inspect { width: 258px; flex: none; display: flex; flex-direction: column; padding: 1px 0 0 1px; border-left: 1px solid #222; }
.objects, .props { display: grid; grid-template-columns: 1fr 13px; background: #333; min-height: 0; column-gap: 1px; }
.objects { grid-template-rows: 1fr 13px; flex: 0 0 436px; }
.props { grid-template-rows: 1fr 13px; flex: 1; }
.clip { overflow: hidden; min-height: 0; }
.sb.v { grid-column: 2; grid-row: 1; }
.sb.h { grid-row: 2; }
.tree, .ptable { width: 100%; table-layout: fixed; border-spacing: 0; white-space: nowrap; }
.tree th, .ptable th { height: 20px; background: #2a2a2a; font-weight: 400; text-align: left; padding: 0 2px; overflow: hidden; }
.tree th + th, .ptable th + th { border-left: 1px solid #555; }
.tree th:last-child { width: 12px; }
.tree td { height: 17px; line-height: 17px; padding: 0 0 0 63px; overflow: hidden; }
.tree td:last-child { padding: 0 0 0 5px; }
.tree tr:nth-child(even) td { background: #505050; }
.tree .sel td { background: #1e1e1e; color: #fff; }
.tree .tall td { height: 19px; }
.tree .l0 { padding-left: 6px; }
.tree .l1 { padding-left: 26px; }
.tree .l2 { padding-left: 43px; }
.tree svg { display: inline-block; vertical-align: middle; margin: 0 6px 0 0; height: 16px; }
.tri { display: inline-block; width: 8px; height: 5px; background: #aaa; clip-path: polygon(0 0, 100% 0, 50% 100%); margin-right: 9px; vertical-align: 2px; }
.propbar { height: 24px; flex: none; display: flex; align-items: center; gap: 6px; border-top: 1px solid #5c5c5c; padding-right: 4px; }
.propbar .filter { flex: 1; min-width: 0; height: 22px; padding: 2px 3px 0; }
.propbar svg { width: 18px; height: 16px; }
.who { height: 16px; flex: none; margin: 1px 0; padding: 0 2px; line-height: 15px; background: #505050; border: 1px solid #666; white-space: pre; }
.ptable td { height: 21px; line-height: 20px; padding: 0 0 0 15px; border-bottom: 1px solid #2b2b2b; overflow: hidden; position: relative; }
.ptable td + td { padding-left: 3px; border-left: 1px solid #2b2b2b; }
.ptable th:first-child { width: 141px; }
.ptable th span { margin-left: -8px; }
.ptable .a td { background: #747458; }
.ptable .b td { background: #65654a; }
.ptable .cat td { background: #232323; color: #f00; font-weight: 700; border: 0; }
.ptable .last td { height: 22px; }
.ptable .cur td { height: 22px; }
.ptable .name td { background: #2a261f; font-weight: 700; color: #fff; }
.ptable .name td:first-child { box-shadow: inset 12px 0 #3f362c; }
.ptable .name td + td { font-weight: 400; padding: 0; }
.ptable .bold td:first-child { font-weight: 700; }
.ptable .sub td:first-child { padding-left: 35px; }
.ptable .tri { position: absolute; left: -2px; top: 7px; }
.ptable .tri.r { width: 5px; height: 8px; left: 0; top: 6px; clip-path: polygon(0 0, 100% 50%, 0 100%); }
.ptable svg { display: inline-block; vertical-align: middle; }
.ptable .cur svg { margin-right: 1px; }
.fa { display: inline-block; width: 22px; padding-left: 3px; color: #000; font-family: "Liberation Serif", serif; }
.edit { display: flex; gap: 3px; padding-right: 1px; }
td .edit input { flex: 1; min-width: 0; height: 20px; background: #1c1c1c; border-right: 1px solid #fff; direction: rtl; }
td .edit button { width: 14px; height: 18px; border: 1px solid #444; border-radius: 3px; display: grid; place-items: center; }
input[type=checkbox] { appearance: none; display: block; width: 14px; height: 14px; background: #333; border: 1px solid #222; }
input[type=checkbox]:checked::before { content: ""; display: block; width: 6px; height: 10px; margin: 0 3px; border: solid #ddd; border-width: 0 2px 2px 0; transform: rotate(35deg); }

.status { height: 27px; flex: none; display: flex; align-items: center; position: relative; padding: 2px 0 0 8px; }
.side { margin-right: 12px; }
.locate { width: 201px; height: 21px; background: #2f2f2f; display: flex; align-items: center; gap: 5px; padding-left: 6px; }
.locate input { flex: 1; min-width: 0; }
.locate input::placeholder { color: #8a8a8a; }
.status nav { display: flex; gap: 19px; margin-left: 2px; padding: 2px 0 0 9px; border-left: 1px solid #666; height: 21px; align-items: center; }
.status nav button { white-space: pre; color: #eee; }
.ud { margin-left: 20px; }
.rt { position: absolute; right: 7px; top: 8px; }
.mark { position: absolute; right: 10px; top: 9px; font: 16px/20px "Liberation Sans", sans-serif; color: #c4c4c4; }
.taskbar { height: 10px; flex: none; overflow: hidden; background: linear-gradient(90deg, #e4dcea, #f0dcdc 36%, #f3f0f3 37% 50%, #ead8e4 60%, #e0dcea 80%, #f1eeee 85%); color: #222; font-size: 14px; line-height: 20px; display: flex; justify-content: flex-end; gap: 146px; padding: 2px 52px 0 0; }
```
